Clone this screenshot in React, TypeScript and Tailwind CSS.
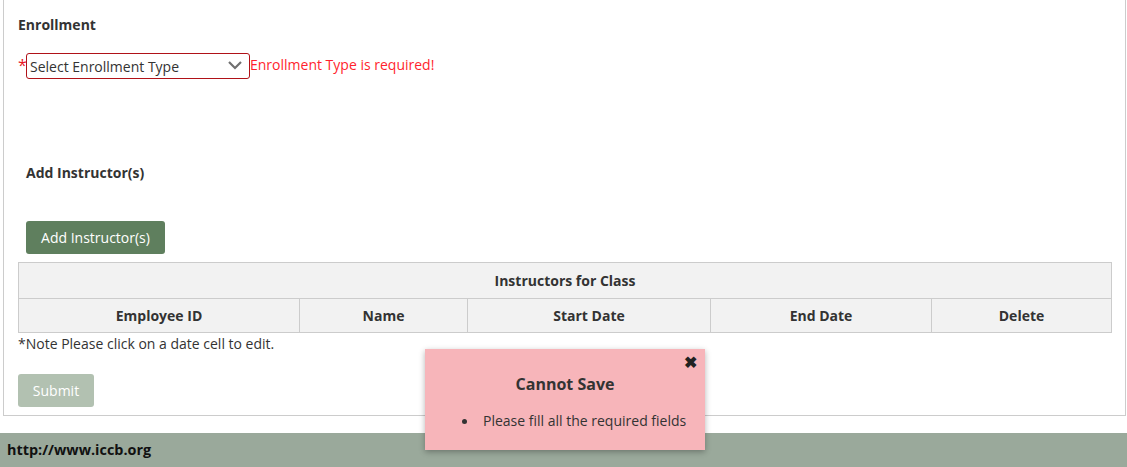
import React from "react";

export default function App() {
  const font = { fontFamily: '"Open Sans", "Liberation Sans", sans-serif' };
  return (
    <div className="relative w-[1127px] h-[467px] bg-white overflow-hidden text-[14px] text-[#333]" style={font}>
      <div className="ml-[3px] w-[1123px] h-[416px] border border-t-0 border-[#cccccc] pl-[14px] pr-[14px] flex flex-col">
        <div className="mt-[15px] h-[20px] leading-[20px] font-bold text-[#333]">Enrollment</div>
        <div className="mt-[18px] flex items-start h-[26px]">
          <span className="text-[#e8161f] text-[16px] leading-[22px] w-[8px] mt-[1px]">*</span>
          <div className="w-[224px] h-[26px] border border-[#b01218] rounded-[3px] flex items-center justify-between pl-[3px] pr-[6px]">
            <span className="text-[14px] text-[#333] leading-[20px] mt-[2px]">Select Enrollment Type</span>
            <svg width="16" height="10" viewBox="0 0 16 10" className="mt-[-2px]">
              <path d="M2 2 L8 8 L14 2" fill="none" stroke="#707070" strokeWidth="2.2" />
            </svg>
          </div>
          <span className="text-[#ff1f2e] text-[14px] leading-[20px] mt-[2px]">Enrollment Type is required!</span>
        </div>
        <div className="ml-[8px] mt-[84px] h-[20px] leading-[20px] font-bold">Add Instructor(s)</div>
        <button className="ml-[8px] mt-[38px] w-[139px] h-[33px] bg-[#5f7f5e] rounded-[3px] text-white text-[14px] flex items-center justify-center">
          Add Instructor(s)
        </button>
        <table className="mt-[8px] w-[1093px] border-collapse bg-[#f2f2f2] text-[14px] font-bold text-[#333] table-fixed">
          <colgroup>
            <col className="w-[281px]" />
            <col className="w-[168px]" />
            <col className="w-[243px]" />
            <col className="w-[221px]" />
            <col className="w-[180px]" />
          </colgroup>
          <thead>
            <tr className="h-[36px]">
              <th colSpan={5} className="border border-[#cccccc] text-center font-bold p-0">Instructors for Class</th>
            </tr>
            <tr className="h-[34px]">
              <th className="border border-[#cccccc] text-center font-bold p-0">Employee ID</th>
              <th className="border border-[#cccccc] text-center font-bold p-0">Name</th>
              <th className="border border-[#cccccc] text-center font-bold p-0">Start Date</th>
              <th className="border border-[#cccccc] text-center font-bold p-0">End Date</th>
              <th className="border border-[#cccccc] text-center font-bold p-0">Delete</th>
            </tr>
          </thead>
        </table>
        <div className="mt-[1px] h-[20px] leading-[20px] text-[14px] text-[#333]">*Note Please click on a date cell to edit.</div>
        <button className="mt-[20px] w-[76px] h-[33px] bg-[#b2c1b1] rounded-[3px] text-white text-[14px] flex items-center justify-center">
          Submit
        </button>
      </div>
      <div className="mt-[17px] h-[34px] bg-[#9aa99b] flex items-center pl-[7px]">
        <span className="font-bold text-[14.4px] text-[#111]">http://www.iccb.org</span>
      </div>

      <div className="absolute left-[425px] top-[349px] w-[280px] h-[101px] bg-[#f7b5ba] shadow-[0_2px_6px_rgba(0,0,0,0.3)]">
        <span className="absolute right-[8px] top-[3px] text-[16px] font-bold text-[#222] leading-[20px]">✖</span>
        <div className="text-center font-bold text-[16px] text-[#333] mt-[24px] leading-[22px] pl-[-2px]">Cannot Save</div>
        <div className="mt-[16px] pl-[36px] flex items-center text-[14px] text-[#333] leading-[20px]">
          <span className="w-[5px] h-[5px] rounded-full bg-[#333] ml-[1px] mr-[16px]"></span>
          <span>Please fill all the required fields</span>
        </div>
      </div>
    </div>
  );
}
